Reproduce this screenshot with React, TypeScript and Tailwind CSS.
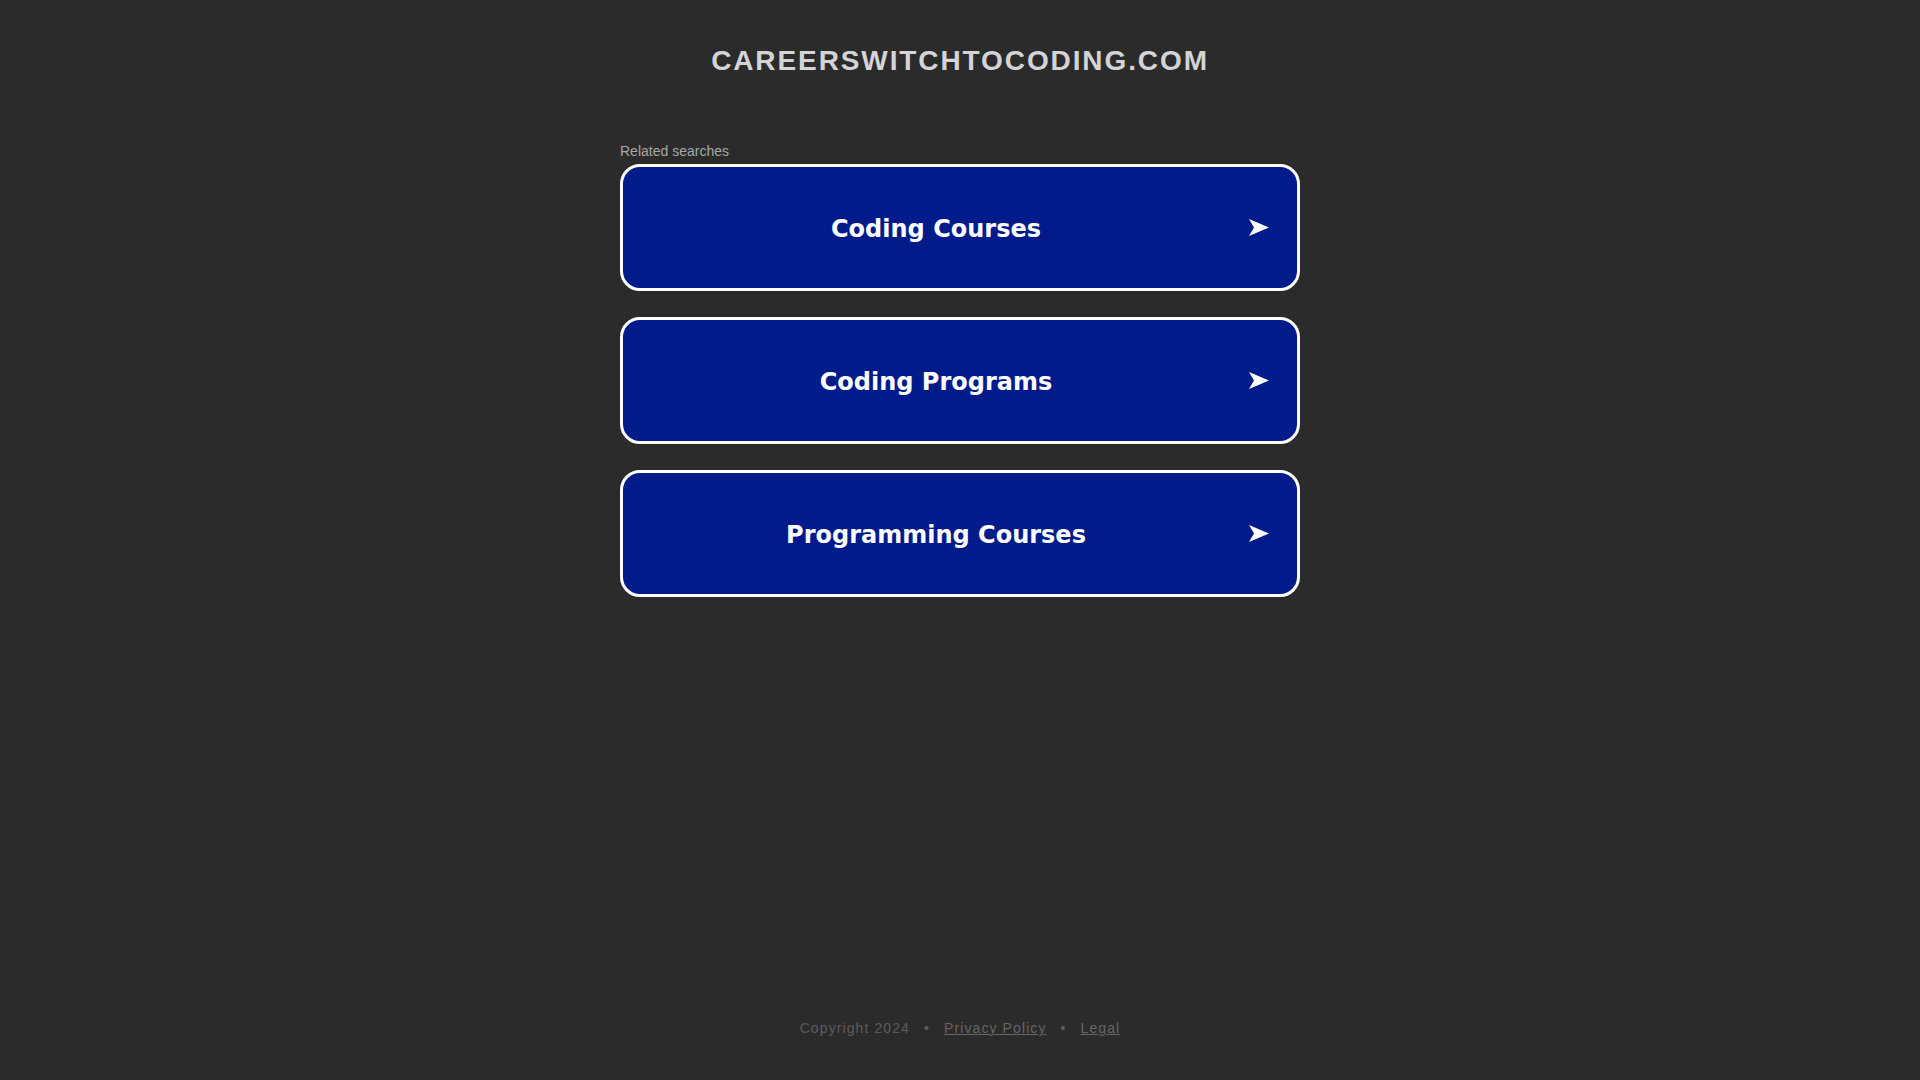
const searches = ["Coding Courses", "Coding Programs", "Programming Courses"];

const Arrow = () => (
    <svg width="20" height="17" viewBox="0 0 20 17" className="shrink-0">
        <polygon points="0,0 20,8.5 0,17 5,8.5" fill="#ffffff" />
    </svg>
);

const SearchLink = ({ label }: { label: string }) => (
    <a
        href="#"
        className="flex items-center h-[127px] w-full rounded-[20px] border-[3px] border-white bg-[#011b8b] pr-[28px] no-underline"
    >
        <span className="flex-1 pt-[2px] text-center text-white text-[24px] font-bold leading-none font-['DejaVu_Sans',sans-serif]">
            {label}
        </span>
        <Arrow />
    </a>
);

export default function App() {
    return (
        <div className="h-screen w-full bg-[#2b2b2b] flex flex-col items-center font-['Liberation_Sans',Arial,sans-serif]">
            <h1 className="mt-[47px] text-[28px] leading-[28px] font-bold tracking-[1.9px] text-[#d4d4d8]">
                CAREERSWITCHTOCODING.COM
            </h1>

            <div className="mt-[69px] w-[680px] flex flex-col">
                <p className="text-[14px] leading-[14px] text-[#a8a8a8] mb-[6px]">Related searches</p>
                <div className="flex flex-col gap-[26px]">
                    {searches.map((s) => (
                        <SearchLink key={s} label={s} />
                    ))}
                </div>
            </div>

            <footer className="mt-auto pb-[45px] flex items-center text-[14px] leading-[14px] tracking-[1.1px] text-[#5c5c5c]">
                <span>Copyright 2024</span>
                <span className="mx-[14px]">•</span>
                <a href="#" className="underline text-[#666666]">Privacy Policy</a>
                <span className="mx-[14px]">•</span>
                <a href="#" className="underline text-[#666666]">Legal</a>
            </footer>
        </div>
    );
}
